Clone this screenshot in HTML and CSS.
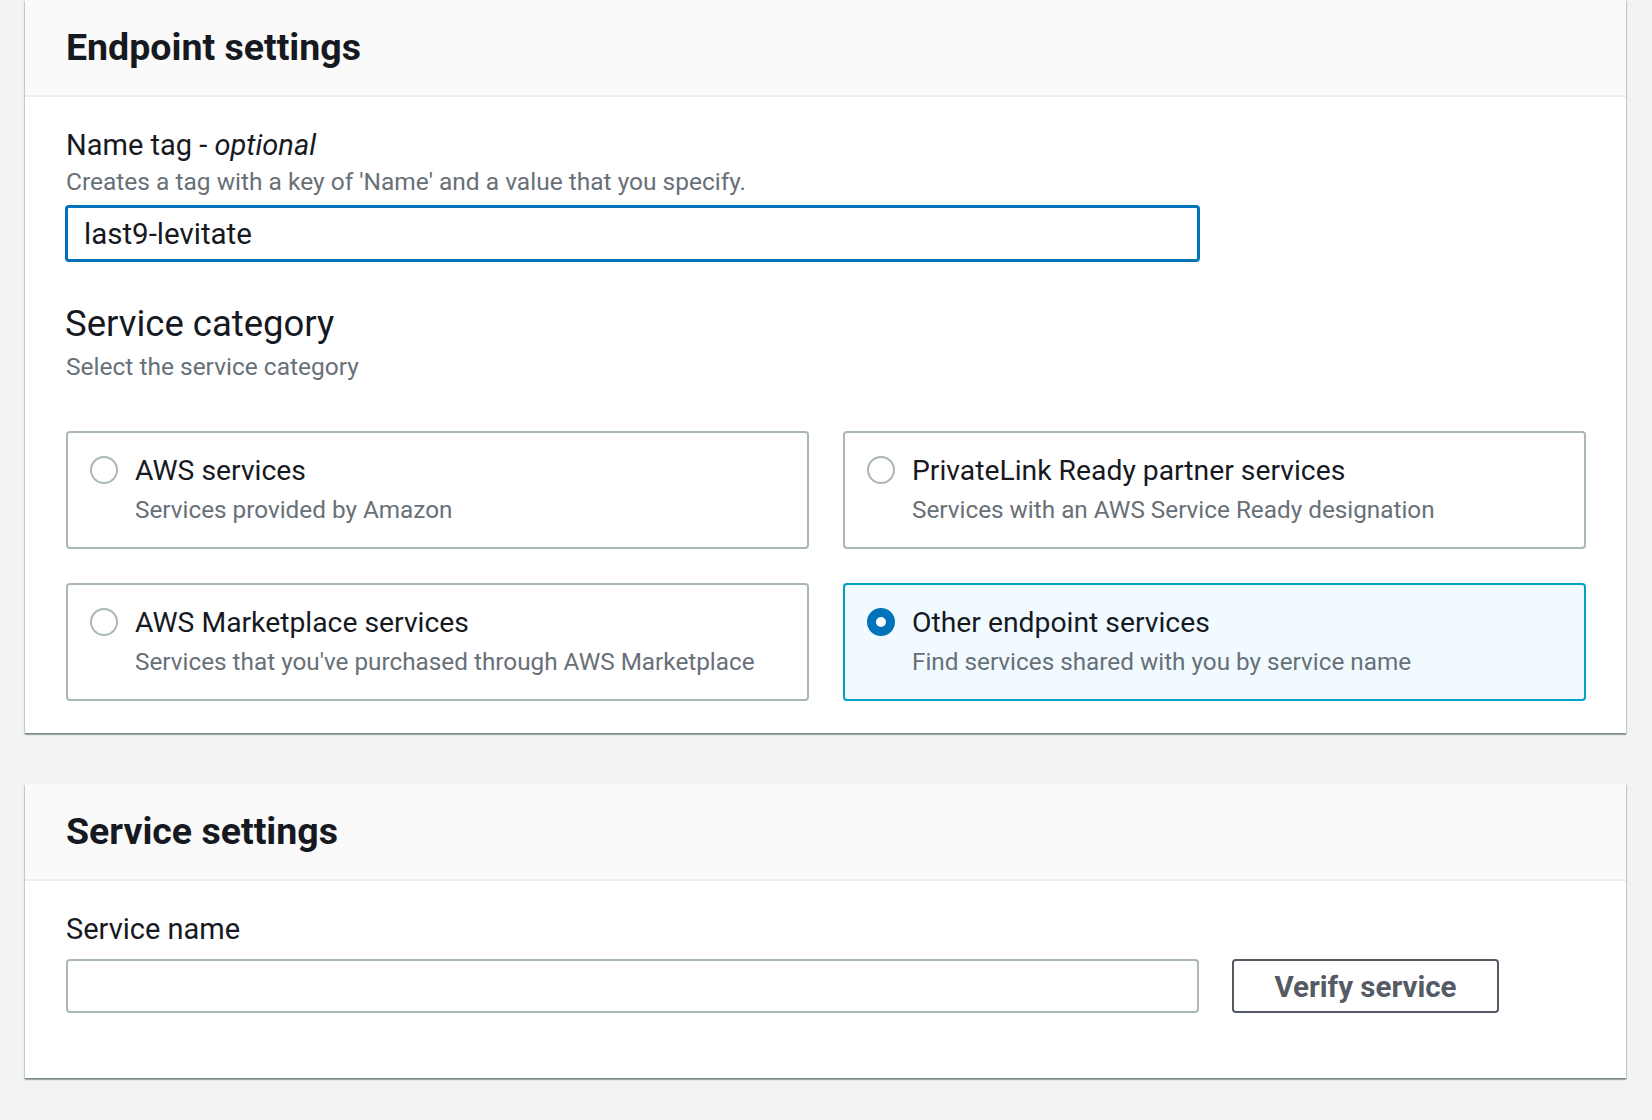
FILE: index.html
```html
<!DOCTYPE html>
<html lang="en">
<head>
<meta charset="utf-8">
<title>Endpoint settings</title>
<link rel="stylesheet" href="styles.css">
</head>
<body>
<div class="page">
  <section class="panel">
    <header class="panel-header">
      <h2 class="panel-title">Endpoint settings</h2>
    </header>
    <div class="panel-body panel-body--first">
      <div class="field">
        <div class="label">Name tag - <i>optional</i></div>
        <div class="desc desc--field">Creates a tag with a key of 'Name' and a value that you specify.</div>
        <div class="text-input text-input--focused">last9-levitate</div>
      </div>
      <div class="section-head">
        <h3 class="section-title">Service category</h3>
        <div class="desc">Select the service category</div>
      </div>
      <div class="tiles">
        <div class="tile">
          <span class="radio"></span>
          <div class="tile-text">
            <div class="tile-title">AWS services</div>
            <div class="tile-desc">Services provided by Amazon</div>
          </div>
        </div>
        <div class="tile">
          <span class="radio"></span>
          <div class="tile-text">
            <div class="tile-title">PrivateLink Ready partner services</div>
            <div class="tile-desc">Services with an AWS Service Ready designation</div>
          </div>
        </div>
        <div class="tile">
          <span class="radio"></span>
          <div class="tile-text">
            <div class="tile-title">AWS Marketplace services</div>
            <div class="tile-desc">Services that you've purchased through AWS Marketplace</div>
          </div>
        </div>
        <div class="tile tile--selected">
          <span class="radio radio--checked"></span>
          <div class="tile-text">
            <div class="tile-title">Other endpoint services</div>
            <div class="tile-desc">Find services shared with you by service name</div>
          </div>
        </div>
      </div>
    </div>
  </section>

  <section class="panel panel--second">
    <header class="panel-header">
      <h2 class="panel-title">Service settings</h2>
    </header>
    <div class="panel-body panel-body--second">
      <div class="label label--spaced">Service name</div>
      <div class="input-row">
        <div class="text-input text-input--plain"></div>
        <button class="btn" type="button">Verify service</button>
      </div>
    </div>
  </section>
</div>
</body>
</html>
```

FILE: styles.css
```css
* { box-sizing: border-box; }

html, body {
  margin: 0;
  padding: 0;
  background: #f2f3f3;
}

body {
  font-family: Roboto, "Liberation Sans", Arial, sans-serif;
  color: #16191f;
}

.page {
  padding: 0 25px 0 25px;
  width: 1652px;
  height: 1120px;
  overflow: hidden;
}

.panel {
  width: 1601px;
  background: #ffffff;
  box-shadow: 0 2px 1px 0 rgba(0, 28, 36, 0.3), 1px 1px 1px 0 rgba(0, 28, 36, 0.15), -1px 1px 1px 0 rgba(0, 28, 36, 0.15);
}

.panel--second {
  margin-top: 51px;
}

.panel-header {
  background: #fafafa;
  border-bottom: 2px solid #eaeded;
  height: 97px;
  padding: 27px 40px 0 41px;
}

.panel-title {
  margin: 0;
  font-size: 37.5px;
  line-height: 40px;
  font-weight: 700;
  color: #16191f;
}

.panel-body {
  padding: 31px 40px 32px 40px;
}

.panel-body--second {
  padding-bottom: 65px;
}

.label {
  font-size: 29px;
  line-height: 32px;
  color: #16191f;
  padding-left: 1px;
  padding-top: 1px;
  height: 32px;
}

.label i {
  font-style: italic;
}

.label--spaced {
  margin-bottom: 15px;
}

.desc {
  font-size: 24.5px;
  line-height: 28px;
  color: #687078;
  padding-left: 1px;
}

.desc--field {
  margin-top: 8px;
}

.text-input {
  width: 1135px;
  border-radius: 4px;
  background: #ffffff;
  font-size: 29.5px;
  color: #16191f;
}

.text-input--focused {
  margin-top: 9px;
  height: 57px;
  border: 3px solid #0073bb;
  padding: 2px 16px 0 16px;
  line-height: 49px;
}

.text-input--plain {
  height: 54px;
  border: 2px solid #aab7b8;
  width: 1133px;
  margin-left: 1px;
}

.section-head {
  margin-top: 41px;
}

.section-title {
  margin: 0 0 8px 0;
  font-size: 36.5px;
  line-height: 42px;
  font-weight: 400;
  color: #16191f;
}

.tiles {
  margin-top: 50px;
  display: grid;
  grid-template-columns: 1fr 1fr;
  column-gap: 34px;
  row-gap: 34px;
  padding-left: 1px;
}

.tile {
  display: flex;
  align-items: flex-start;
  gap: 17px;
  height: 118px;
  border: 2px solid #aab7b8;
  border-radius: 4px;
  padding: 22px 20px 23px 22px;
  background: #ffffff;
}

.tile--selected {
  border-color: #00a1c9;
  background: #f1faff;
}

.radio {
  flex: none;
  width: 28px;
  height: 28px;
  margin-top: 1px;
  border-radius: 50%;
  border: 2px solid #aab7b8;
  background: #ffffff;
}

.radio--checked {
  border: 9px solid #0073bb;
  background: #ffffff;
}

.tile-text {
  display: flex;
  flex-direction: column;
  gap: 9px;
}

.tile-title {
  font-size: 28.3px;
  line-height: 32px;
  color: #16191f;
}

.tile-desc {
  font-size: 24.3px;
  line-height: 28px;
  color: #687078;
}

.input-row {
  display: flex;
  align-items: center;
  gap: 33px;
}

.btn {
  width: 267px;
  height: 54px;
  border: 2px solid #545b64;
  border-radius: 4px;
  background: #ffffff;
  color: #545b64;
  font-family: Roboto, "Liberation Sans", Arial, sans-serif;
  font-size: 29.5px;
  font-weight: 700;
  padding: 2px 0 0 0;
}
```
